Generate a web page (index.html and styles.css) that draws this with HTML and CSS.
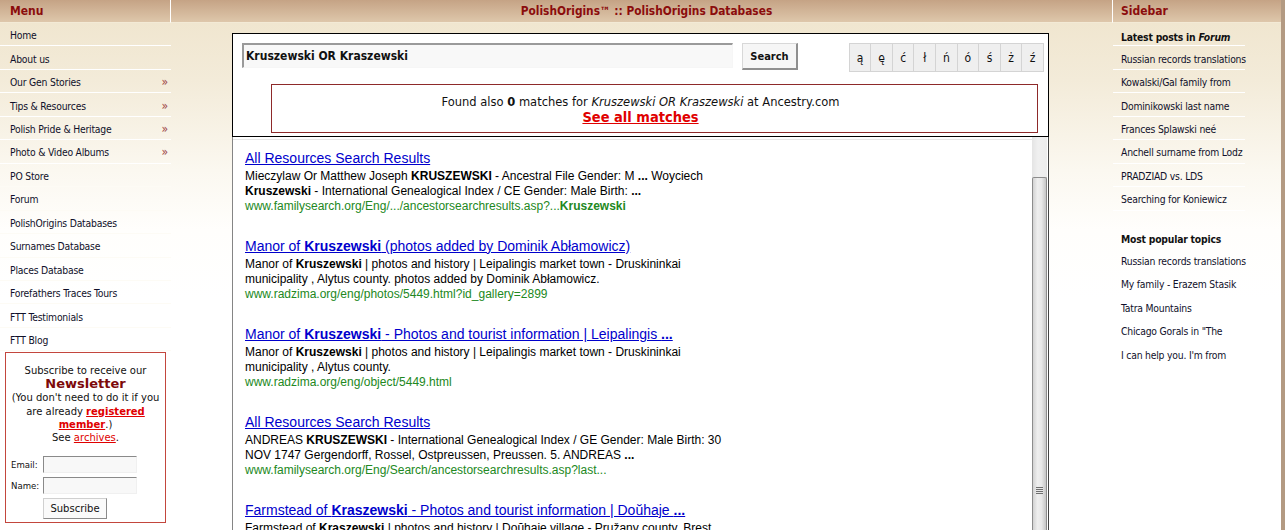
FILE: index.html
```html
<!DOCTYPE html>
<html lang="en">
<head>
    <meta charset="UTF-8">
    <title>PolishOrigins Databases</title>
    <link rel="stylesheet" href="styles.css">
</head>
<body>

<div class="page">

    <div class="col left">
        <div class="head">Menu</div>
        <ul class="menu">
            <li><a href="#">Home</a></li>
            <li><a href="#">About us</a></li>
            <li><a href="#">Our Gen Stories <span class="more">&raquo;</span></a></li>
            <li><a href="#">Tips &amp; Resources <span class="more">&raquo;</span></a></li>
            <li><a href="#">Polish Pride &amp; Heritage <span class="more">&raquo;</span></a></li>
            <li><a href="#">Photo &amp; Video Albums <span class="more">&raquo;</span></a></li>
            <li><a href="#">PO Store</a></li>
            <li><a href="#">Forum</a></li>
            <li><a href="#">PolishOrigins Databases</a></li>
            <li><a href="#">Surnames Database</a></li>
            <li><a href="#">Places Database</a></li>
            <li><a href="#">Forefathers Traces Tours</a></li>
            <li><a href="#">FTT Testimonials</a></li>
            <li><a href="#">FTT Blog</a></li>
        </ul>

        <div class="newsletter">
            <p class="nl-text">
                Subscribe to receive our<br>
                <span class="nl-title">Newsletter</span><br>
                (You don't need to do it if you<br>
                are already <a class="strong" href="#">registered<br>member</a>.)<br>
                See <a href="#">archives</a>.
            </p>
            <form class="nl-form">
                <label>Email:</label><input type="text">
                <label>Name:</label><input type="text">
                <span></span><button type="button">Subscribe</button>
            </form>
        </div>
    </div>

    <div class="col main">
        <div class="head center">PolishOrigins&trade; :: PolishOrigins Databases</div>

        <div class="search-frame">
            <div class="search-row">
                <input class="query" type="text" value="Kruszewski OR Kraszewski">
                <button class="search-btn" type="button">Search</button>
                <div class="letters">
                    <span>ą</span><span>ę</span><span>ć</span><span>ł</span><span>ń</span><span>ó</span><span>ś</span><span>ż</span><span>ź</span>
                </div>
            </div>
            <div class="ancestry">
                <div>Found also <b>0</b> matches for <i>Kruszewski OR Kraszewski</i> at Ancestry.com</div>
                <a href="#">See all matches</a>
            </div>
        </div>

        <div class="results-frame">
            <div class="results">
                <div class="result">
                    <a class="r-title" href="#">All Resources Search Results</a>
                    <div class="r-text">Mieczylaw Or Matthew Joseph <b>KRUSZEWSKI</b> - Ancestral File Gender: M <b>...</b> Woyciech<br><b>Kruszewski</b> - International Genealogical Index / CE Gender: Male Birth: <b>...</b></div>
                    <div class="r-url">www.familysearch.org/Eng/.../ancestorsearchresults.asp?...<b>Kruszewski</b></div>
                </div>
                <div class="result">
                    <a class="r-title" href="#">Manor of <b>Kruszewski</b> (photos added by Dominik Abłamowicz)</a>
                    <div class="r-text">Manor of <b>Kruszewski</b> | photos and history | Leipalingis market town - Druskininkai<br>municipality , Alytus county. photos added by Dominik Abłamowicz.</div>
                    <div class="r-url">www.radzima.org/eng/photos/5449.html?id_gallery=2899</div>
                </div>
                <div class="result">
                    <a class="r-title" href="#">Manor of <b>Kruszewski</b> - Photos and tourist information | Leipalingis <b>...</b></a>
                    <div class="r-text">Manor of <b>Kruszewski</b> | photos and history | Leipalingis market town - Druskininkai<br>municipality , Alytus county.</div>
                    <div class="r-url">www.radzima.org/eng/object/5449.html</div>
                </div>
                <div class="result">
                    <a class="r-title" href="#">All Resources Search Results</a>
                    <div class="r-text">ANDREAS <b>KRUSZEWSKI</b> - International Genealogical Index / GE Gender: Male Birth: 30<br>NOV 1747 Gergendorff, Rossel, Ostpreussen, Preussen. 5. ANDREAS <b>...</b></div>
                    <div class="r-url">www.familysearch.org/Eng/Search/ancestorsearchresults.asp?last...</div>
                </div>
                <div class="result">
                    <a class="r-title" href="#">Farmstead of <b>Kraszewski</b> - Photos and tourist information | Doŭhaje <b>...</b></a>
                    <div class="r-text">Farmstead of <b>Kraszewski</b> | photos and history | Doŭhaje village - Pružany county, Brest</div>
                </div>
            </div>
            <div class="scrollbar">
                <div class="thumb"><div class="grip"></div></div>
            </div>
        </div>
    </div>

    <div class="col right">
        <div class="head">Sidebar</div>
        <ul class="side">
            <li class="side-title"><span>Latest posts in <i>Forum</i></span></li>
            <li><a href="#">Russian records translations</a></li>
            <li><a href="#">Kowalski/Gal family from</a></li>
            <li><a href="#">Dominikowski last name</a></li>
            <li><a href="#">Frances Splawski neé</a></li>
            <li><a href="#">Anchell surname from Lodz</a></li>
            <li><a href="#">PRADZIAD vs. LDS</a></li>
            <li><a href="#">Searching for Koniewicz</a></li>
        </ul>
        <ul class="side popular">
            <li class="side-title">Most popular topics</li>
            <li><a href="#">Russian records translations</a></li>
            <li><a href="#">My family - Erazem Stasik</a></li>
            <li><a href="#">Tatra Mountains</a></li>
            <li><a href="#">Chicago Gorals in "The</a></li>
            <li><a href="#">I can help you. I'm from</a></li>
        </ul>
    </div>

</div>

</body>
</html>
```

FILE: styles.css
```css
body{margin:0;background:#b39a82;overflow:hidden;font-family:"DejaVu Sans Condensed","DejaVu Sans",sans-serif;color:#111;}
.page{display:grid;grid-template-columns:171px 942px 168px;width:1281px;height:530px;background:linear-gradient(#efe4cc 0px,#f3ebd9 80px,#fbf8f0 170px,#fffefc 230px,#fff 300px);}
.col{min-width:0;}

.head{height:23px;box-sizing:border-box;background:linear-gradient(#c5a385,#dec7ab);border-right:1px solid #fff;border-bottom:1px solid #f3ead6;padding-left:10px;line-height:22px;font-weight:bold;font-size:12px;color:#8b0c0c;}
.head.center{text-align:center;padding-left:10px;font-size:11.8px;}
.right .head{border-right:0;padding-left:8px;}

/* left menu */
.menu, .side{list-style:none;margin:0;padding:0;}
.menu li a{display:flex;align-items:center;justify-content:space-between;height:23.46px;box-sizing:border-box;border-bottom:1px solid #fff;padding:2px 3px 0 10px;font-size:10.3px;letter-spacing:-0.2px;color:#10102a;text-decoration:none;}
.menu li:nth-child(n+7) a{border-bottom-color:#fdfbf5;}
.more{color:#a04848;font-size:12px;}

.newsletter{margin:1px 0 0 5px;width:161px;height:171px;box-sizing:border-box;border:1px solid #c3463d;font:10px "DejaVu Sans",sans-serif;}
.nl-text{margin:0;padding-top:11px;text-align:center;line-height:13.4px;color:#111;}
.nl-title{font-size:13px;font-weight:bold;color:#7d0a0a;line-height:12px;}
.nl-text a{color:#e00000;}
.nl-text a.strong{font-weight:bold;}
.nl-form{display:grid;grid-template-columns:32px 94px;row-gap:4px;margin:11px 0 0 5px;align-items:center;}
.nl-form label{font:9.5px "DejaVu Sans Condensed",sans-serif;}
.nl-form input{width:94px;height:17px;box-sizing:border-box;border:1px solid #f0f0f0;border-top-color:#8a8a8a;border-left-color:#8a8a8a;background:#f8f8f8;padding:0;}
.nl-form button{width:64px;height:21px;padding:0;font:10px "DejaVu Sans",sans-serif;background:#fafafa;border:1px solid #d0d0d0;border-right-color:#8a8a8a;border-bottom-color:#8a8a8a;color:#111;}

/* search */
.search-frame{margin:10px 0 0 61px;width:817px;height:104px;box-sizing:border-box;border:1px solid #000;background:#fff;padding:9px 4px 0 9px;}
.search-row{display:flex;align-items:flex-start;}
.query{width:491px;height:25px;box-sizing:border-box;border:1px solid #f6f6f6;border-top:2px solid #9a9a9a;border-left:2px solid #9a9a9a;background:#f8f8f8;padding:0 2px;font:bold 12px "DejaVu Sans Condensed","DejaVu Sans",sans-serif;color:#111;}
.search-btn{margin-left:9px;width:56px;height:27px;padding:0;background:#f6f6f6;border:1px solid #d8d8d8;border-right:2px solid #8f8f8f;border-bottom:2px solid #8f8f8f;font:bold 11px "DejaVu Sans Condensed","DejaVu Sans",sans-serif;color:#111;}
.letters{margin-left:auto;display:flex;border:1px solid #d4d4d4;background:#d4d4d4;gap:1px;}
.letters span{width:20.6px;height:27px;background:#efefef;display:flex;align-items:center;justify-content:center;font-size:12px;color:#111;}
.ancestry{margin:12px 0 0 29px;width:767px;height:49px;box-sizing:border-box;border:1px solid #8e2a2a;padding:10px 28px 0 0;text-align:center;font:11.5px "DejaVu Sans",sans-serif;line-height:14px;}
.ancestry a{display:inline-block;font:bold 14.5px "DejaVu Sans Condensed","DejaVu Sans",sans-serif;color:#e00000;line-height:16px;}

/* results */
.results-frame{margin-left:61px;width:817px;height:400px;box-sizing:border-box;border-left:1px solid #858585;border-right:1px solid #444;background:#fff;display:flex;}
.results{flex:1;margin-top:2px;border-top:1px solid #e6e6e6;padding:7.5px 0 0 12px;font-family:"Liberation Sans",Arial,sans-serif;}
.result{margin-bottom:22px;white-space:nowrap;}
.r-title{display:block;font-size:14px;line-height:21px;color:#0000cc;}
.r-text{font-size:12px;line-height:15px;color:#000;}
.r-url{font-size:12px;line-height:15px;color:#228822;}
.scrollbar{width:15px;margin-right:1px;background:linear-gradient(90deg,#e4e4e4,#f0f0f0 40%,#ececec);padding-top:40px;box-sizing:border-box;}
.thumb{height:400px;box-sizing:border-box;border:1px solid #8c8c8c;border-bottom:0;border-radius:2px 2px 0 0;background:linear-gradient(90deg,#d2d2d2,#eeeeee 35%,#e8e8e8 65%,#c6c6c6);padding-top:309px;}
.grip{width:7px;height:7px;margin:0 auto;background:repeating-linear-gradient(#6e6e6e 0 1px,#e8e8e8 1px 2px);}

/* right sidebar */
.side li{height:23.46px;box-sizing:border-box;border-bottom:1px solid #fff;width:132px;padding:2px 0 0 8px;display:flex;align-items:center;font-size:10.3px;letter-spacing:-0.2px;white-space:nowrap;}
.side li a{color:#10102a;text-decoration:none;}
.side-title{font-weight:bold;color:#111;}
.side li.side-title:first-child{padding-top:6px;}
.popular{margin-top:14.6px;}
.popular li{border-bottom-color:transparent;}
```
